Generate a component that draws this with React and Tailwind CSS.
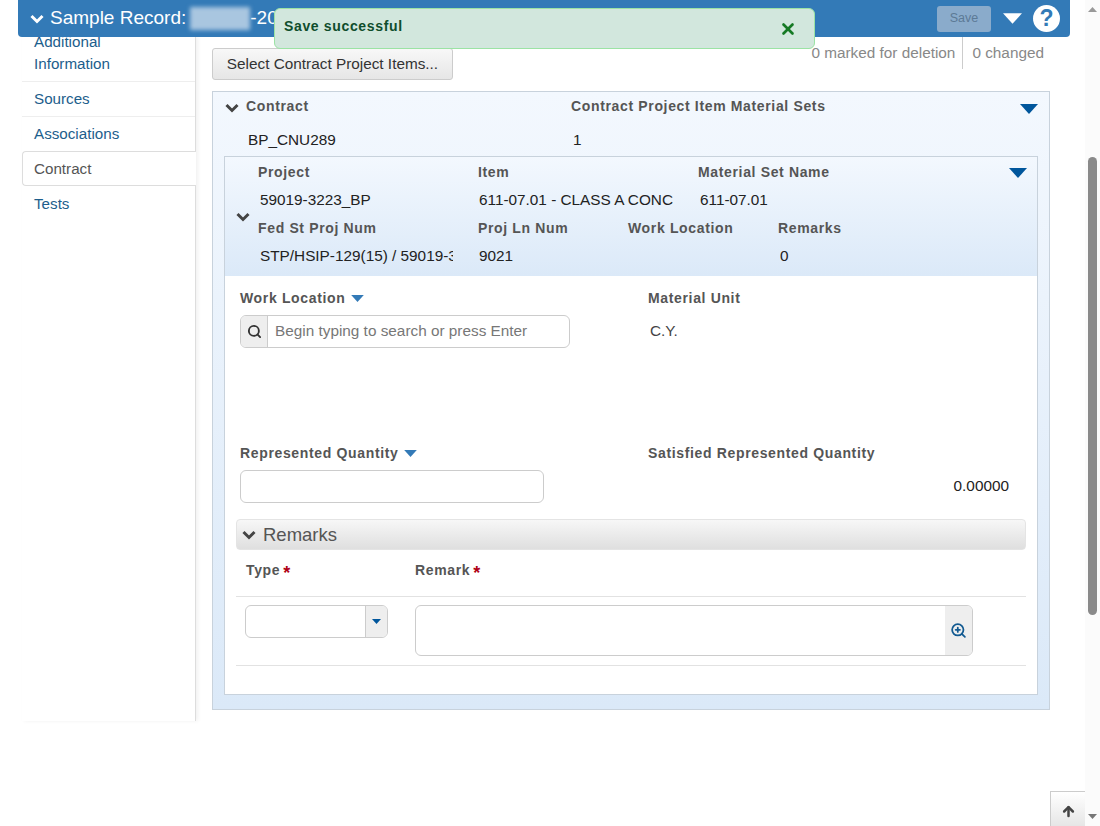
import React from 'react';
import { ArrowUp, Search, X, ZoomIn } from 'lucide-react';

const font = { fontFamily: '"Liberation Sans", Arial, sans-serif' };

const Chevron = ({ className }) => (
  <svg viewBox="0 0 14 10" className={className} fill="none" stroke="currentColor" strokeWidth="3">
    <path d="M1.5 2 L7 7.5 L12.5 2" />
  </svg>
);

const Caret = ({ className }) => (
  <svg viewBox="0 0 18 10" className={className} fill="currentColor">
    <path d="M0 0 H18 L9 10 Z" />
  </svg>
);

const Label = ({ className = '', children }) => (
  <div className={`text-[14px] leading-[20px] font-bold tracking-[0.65px] text-[#555] whitespace-nowrap ${className}`}>
    {children}
  </div>
);

const Value = ({ className = '', children }) => (
  <div className={`text-[15.33px] leading-[20px] text-[#222] whitespace-nowrap overflow-hidden ${className}`}>
    {children}
  </div>
);

const Required = () => <span className="text-[#b00014] text-[18px] leading-[14px] ml-[3px] align-[-4px]">*</span>;

const Sidebar = () => (
  <div className="w-[174px] h-[684px] ml-[22px] shrink-0 border-r border-[#ddd] shadow-[2px_0_4px_rgba(0,0,0,0.06)] text-[15.2px] leading-[22px] text-[#1d5e8c]">
    <div className="pl-[12px] h-[51px] border-b border-[#eee] -mt-[6px]">
      Additional
      <br />
      Information
    </div>
    <div className="pl-[12px] h-[35px] flex items-center border-b border-[#eee]">Sources</div>
    <div className="pl-[12px] h-[34px] flex items-center">Associations</div>
    <div className="pl-[11px] h-[35px] flex items-center text-[#555] bg-white border border-r-0 border-[#ddd] rounded-l-[4px] w-[174px]">
      Contract
    </div>
    <div className="pl-[12px] h-[35px] flex items-center">Tests</div>
  </div>
);

const ItemHeader = () => (
  <div className="h-[119px] flex bg-gradient-to-b from-[#f3f8fe] to-[#dbe9f8]">
    <div className="w-[33px] shrink-0 flex items-center pl-[11px]">
      <Chevron className="w-[14px] h-[10px] text-[#444]" />
    </div>
    <div className="flex-1 pt-[5px]">
      <div className="flex h-[20px]">
        <Label className="w-[220px]">Project</Label>
        <Label className="w-[220px]">Item</Label>
        <Label className="w-[311px]">Material Set Name</Label>
        <Caret className="w-[18px] h-[10px] mt-[6px] text-[#00569c]" />
      </div>
      <div className="flex h-[20px] mt-[8px] pl-[2px]">
        <Value className="w-[219px]">59019-3223_BP</Value>
        <Value className="w-[195px] mr-[26px]">611-07.01 - CLASS A CONC</Value>
        <Value>611-07.01</Value>
      </div>
      <div className="flex h-[20px] mt-[8px]">
        <Label className="w-[220px]">Fed St Proj Num</Label>
        <Label className="w-[150px]">Proj Ln Num</Label>
        <Label className="w-[150px]">Work Location</Label>
        <Label>Remarks</Label>
      </div>
      <div className="flex h-[20px] mt-[8px] pl-[2px]">
        <Value className="w-[193px] mr-[26px]">STP/HSIP-129(15) / 59019-3223</Value>
        <Value className="w-[301px]">9021</Value>
        <Value>0</Value>
      </div>
    </div>
  </div>
);

const ItemBody = () => (
  <div className="h-[418px] bg-white pt-[12px]">
    <div className="flex pl-[15px]">
      <div className="w-[408px]">
        <Label className="flex items-center">
          Work Location
          <Caret className="w-[13px] h-[7px] ml-[6px] text-[#337ab7]" />
        </Label>
        <div className="mt-[7px] w-[330px] h-[33px] flex border border-[#ccc] rounded-[6px] overflow-hidden">
          <div className="w-[27px] bg-[#eee] border-r border-[#ccc] flex items-center justify-center">
            <Search className="w-[15px] h-[15px] text-[#333]" strokeWidth={3} />
          </div>
          <div className="pl-[7px] flex items-center text-[15.33px] text-[#777]">Begin typing to search or press Enter</div>
        </div>
      </div>
      <div>
        <Label>Material Unit</Label>
        <Value className="mt-[13px] pl-[2px] text-[#444]">C.Y.</Value>
      </div>
    </div>
    <div className="flex pl-[15px] mt-[95px]">
      <div className="w-[408px]">
        <Label className="flex items-center">
          Represented Quantity
          <Caret className="w-[13px] h-[7px] ml-[6px] text-[#337ab7]" />
        </Label>
        <div className="mt-[7px] w-[304px] h-[33px] border border-[#ccc] rounded-[6px]" />
      </div>
      <div className="w-[361px]">
        <Label>Satisfied Represented Quantity</Label>
        <Value className="mt-[13px] text-right">0.00000</Value>
      </div>
    </div>
    <div className="mx-[11px] mt-[16px] h-[31px] w-[790px] flex items-center rounded-[4px] border border-[#e4e4e4] bg-gradient-to-b from-[#f7f7f7] to-[#dfdfdf] text-[#555]">
      <Chevron className="w-[14px] h-[10px] ml-[5px] text-[#444]" />
      <span className="ml-[7px] text-[18.5px]">Remarks</span>
    </div>
    <div className="mx-[11px] w-[790px] h-[47px] flex border-b border-[#e2e2e2] pt-[10px]">
      <Label className="w-[179px] pl-[10px]">
        Type
        <Required />
      </Label>
      <Label>
        Remark
        <Required />
      </Label>
    </div>
    <div className="mx-[11px] w-[790px] h-[69px] flex border-b border-[#e2e2e2] pt-[8px]">
      <div className="ml-[9px] w-[143px] h-[33px] flex justify-end border border-[#ccc] rounded-[6px] overflow-hidden">
        <div className="w-[22px] bg-[#eee] border-l border-[#ccc] flex items-center justify-center">
          <Caret className="w-[9px] h-[5px] text-[#00569c]" />
        </div>
      </div>
      <div className="ml-[27px] w-[558px] h-[51px] flex justify-end border border-[#ccc] rounded-[6px] overflow-hidden">
        <div className="w-[27px] bg-[#eee] flex items-center justify-center">
          <ZoomIn className="w-[17px] h-[17px] text-[#125a91]" strokeWidth={2.5} />
        </div>
      </div>
    </div>
  </div>
);

const Content = () => (
  <div className="w-[838px] ml-[16px] shrink-0">
    <div className="h-[54px] flex justify-between">
      <div className="mt-[11px] h-[32px] w-[241px] flex items-center justify-center rounded-[3px] border border-[#ccc] bg-gradient-to-b from-[#f8f8f8] to-[#e6e6e6] text-[15.33px] text-[#333]">
        Select Contract Project Items...
      </div>
      <div className="flex h-[32px] text-[15.33px] text-[#888]">
        <div className="pr-[7px] pt-[5px]">0 marked for deletion</div>
        <div className="border-l border-[#ccc] pl-[9px] pr-[6px] pt-[5px]">0 changed</div>
      </div>
    </div>
    <div className="h-[619px] border border-[#c8d2dc] bg-gradient-to-b from-[#f3f8fe] to-[#dbe9f8] px-[11px] pb-[14px]">
      <div className="h-[64px]">
        <div className="flex pt-[4px] h-[28px]">
          <div className="w-[22px] flex items-center pl-[1px]">
            <Chevron className="w-[14px] h-[10px] text-[#444]" />
          </div>
          <Label className="w-[325px]">Contract</Label>
          <Label className="w-[449px]">Contract Project Item Material Sets</Label>
          <Caret className="w-[18px] h-[10px] mt-[8px] text-[#00569c]" />
        </div>
        <div className="flex mt-[10px] pl-[24px]">
          <Value className="w-[325px]">BP_CNU289</Value>
          <Value>1</Value>
        </div>
      </div>
      <div className="border border-[#c8d2dc]">
        <ItemHeader />
        <ItemBody />
      </div>
    </div>
  </div>
);

const Header = () => (
  <div className="relative z-10 ml-[18px] w-[1052px] h-[37px] bg-[#337ab7] rounded-b-[4px] flex items-center justify-between text-white">
    <div className="flex items-center pl-[12px]">
      <Chevron className="w-[14px] h-[10px] mr-[6px]" />
      <span className="text-[19px] whitespace-nowrap">Sample Record:</span>
      <span className="w-[60px] h-[23px] ml-[4px] bg-[#a9c6e0] blur-[2px]" />
      <span className="text-[19px]">-20</span>
    </div>
    <div className="flex items-center pr-[10px]">
      <div className="w-[54px] h-[26px] flex items-center justify-center rounded-[3px] bg-[#8aabcb] text-[12.5px] text-[#5c7a96]">Save</div>
      <Caret className="w-[19px] h-[11px] ml-[12px]" />
      <div className="w-[27px] h-[27px] ml-[11px] rounded-full bg-white flex items-center justify-center text-[23px] font-bold text-[#337ab7]">?</div>
    </div>
  </div>
);

const Toast = () => (
  <div className="absolute z-20 left-[274px] top-[8px] w-[541px] h-[41px] flex items-center justify-between rounded-[6px] border border-[#9be3a4] bg-[#d2e7dd] pl-[9px] pr-[17px] text-[14px] font-bold tracking-[0.65px] text-[#0f4d2c]">
    <span className="-mt-[5px]">Save successful</span>
    <X className="w-[18px] h-[18px] text-[#157a24]" strokeWidth={3.5} />
  </div>
);

const Scrollbar = () => (
  <div className="w-[15px] h-full shrink-0 flex flex-col items-center bg-[#fbfbfb]">
    <Caret className="w-[9px] h-[5px] mt-[7px] rotate-180 text-[#999]" />
    <div className="w-[9px] h-[458px] mt-[145px] rounded-[5px] bg-[#8a8a8a]" />
    <Caret className="w-[9px] h-[5px] mt-[199px] text-[#777]" />
  </div>
);

export default function App() {
  return (
    <div className="relative w-[1100px] h-[826px] flex overflow-hidden bg-white" style={font}>
      <div className="w-[1085px] shrink-0">
        <Header />
        <div className="flex">
          <Sidebar />
          <Content />
        </div>
      </div>
      <Scrollbar />
      <Toast />
      <div className="absolute left-[1050px] top-[791px] w-[35px] h-[35px] flex items-center justify-center pt-[4px] border-l border-t border-[#ccc] bg-gradient-to-b from-[#fff] to-[#e6e6e6]">
        <ArrowUp className="w-[15px] h-[15px] text-[#444]" strokeWidth={4} />
      </div>
    </div>
  );
}
